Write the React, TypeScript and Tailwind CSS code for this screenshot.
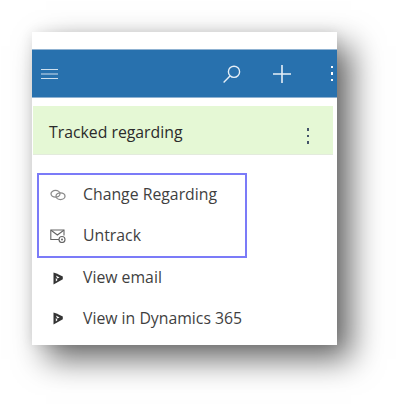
const font = { fontFamily: '"Open Sans", "Noto Sans", sans-serif' };

function DynamicsIcon() {
  return (
    <svg width="10" height="13" viewBox="0 0 10 13" fill="none">
      <path d="M0.5 0.5 L3.5 1.6 L9.8 4.4 L9.8 7.2 L0.5 12.5 Z" fill="#333333" />
      <path d="M2.8 3.6 L6.6 5.6 L4.4 6.5 Z M2.8 5.8 L4.6 8 L2.8 9.6 Z" fill="#ffffff" />
    </svg>
  );
}

function LinkIcon() {
  return (
    <svg width="16" height="12" viewBox="0 0 16 12" fill="none" stroke="#8a8a8a" strokeWidth="1.3">
      <ellipse cx="5.5" cy="4.8" rx="4.5" ry="3.4" />
      <ellipse cx="10.5" cy="7.2" rx="4.5" ry="3.4" />
    </svg>
  );
}

function MailIcon() {
  return (
    <svg width="16" height="14" viewBox="0 0 16 14" fill="none" stroke="#666666" strokeWidth="1.1">
      <path d="M9 10.5 H0.8 V1 H14 V6.5" />
      <path d="M1 1.2 L7.4 6 L13.8 1.2" />
      <circle cx="12" cy="10.5" r="3" fill="#ffffff" />
      <circle cx="12" cy="10.5" r="1" fill="#666666" stroke="none" />
    </svg>
  );
}

function Row({ icon, label }: { icon: React.ReactNode; label: string }) {
  return (
    <div className="flex h-[40.5px] items-center">
      <div className="flex w-[44px] shrink-0 justify-center pr-[7px]">{icon}</div>
      <span className="text-[15.8px] text-[#3f3f3f]">{label}</span>
    </div>
  );
}

export default function App() {
  return (
    <div className="h-[410px] w-[402px] overflow-hidden bg-white pl-[32px] pt-[32px]" style={font}>
      <div className="h-[313px] w-[305px] overflow-hidden bg-white shadow-[14px_14px_30px_0_rgba(0,0,0,0.6),0_0_12px_rgba(0,0,0,0.08)]">
        <div className="h-[17px]" />
        <div className="flex h-[49px] items-center justify-between border-y border-[#8fb2d2] bg-[#2871ae] text-white">
          <svg className="ml-[9px]" width="17" height="12" viewBox="0 0 17 12" stroke="#cfe0ee" strokeWidth="1.2">
            <path d="M0 1.5 H17 M0 6 H17 M0 10.5 H17" />
          </svg>
          <div className="flex items-center">
            <svg width="18" height="18" viewBox="0 0 18 18" fill="none" stroke="#e6eff7" strokeWidth="1.4">
              <circle cx="11" cy="6.8" r="5.6" />
              <path d="M7 11 L0.6 17.5" />
            </svg>
            <svg className="ml-[32px]" width="18" height="18" viewBox="0 0 18 18" stroke="#e6eff7" strokeWidth="1.6">
              <path d="M9 0 V18 M0 9 H18" />
            </svg>
            <div className="ml-[40px] mr-[4px] flex flex-col gap-[4px]">
              <span className="h-[2.5px] w-[2.5px] bg-white" />
              <span className="h-[2.5px] w-[2.5px] bg-white" />
              <span className="h-[2.5px] w-[2.5px] bg-white" />
            </div>
          </div>
        </div>
        <div className="mt-[8px] ml-[1px] flex h-[49px] w-[300px] items-center justify-between border-b border-[#e3ebdc] bg-[#e5f8d5] pl-[16px] pr-[24px] pt-[6px]">
          <span className="text-[15.8px] text-[#2b2b2b]">Tracked regarding</span>
          <div className="mt-[6px] flex flex-col gap-[4px]">
            <span className="h-[2.5px] w-[2.5px] bg-[#44546a]" />
            <span className="h-[2.5px] w-[2.5px] bg-[#44546a]" />
            <span className="h-[2.5px] w-[2.5px] bg-[#44546a]" />
          </div>
        </div>
        <div className="ml-[5px] mt-[18px] w-[210px] border-2 border-[#7b7bf8]">
          <Row icon={<LinkIcon />} label="Change Regarding" />
          <Row icon={<MailIcon />} label="Untrack" />
        </div>
        <div className="ml-[7px]">
          <Row icon={<DynamicsIcon />} label="View email" />
          <Row icon={<DynamicsIcon />} label="View in Dynamics 365" />
        </div>
      </div>
    </div>
  );
}
